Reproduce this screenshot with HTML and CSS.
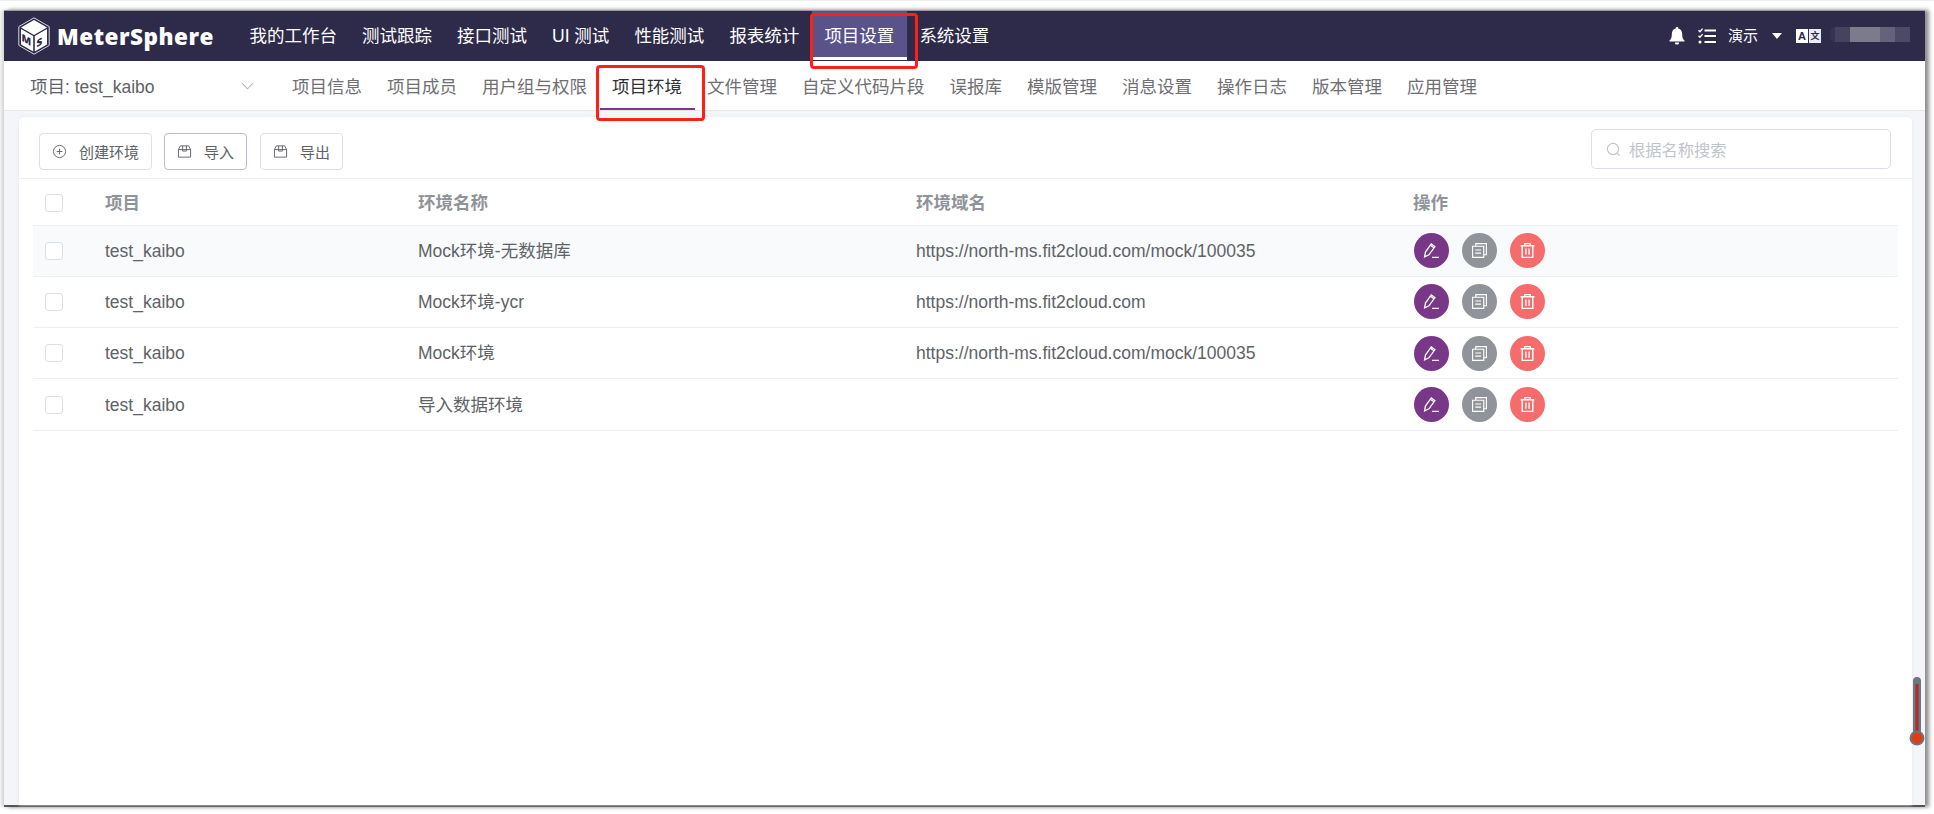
FILE: index.html

```html
<!DOCTYPE html>
<html lang="zh-CN">
<head>
  <meta charset="UTF-8">
  <title>MeterSphere</title>
  <link rel="stylesheet" href="styles.css">
</head>
<body>
  <div class="window">
    <header class="topbar">
      <div class="logo">
        <svg class="logo-mark" viewBox="0 0 32 38" width="32" height="38">
          <path d="M16 .8 31.2 9.6v18.8L16 37.2.8 28.4V9.6z" fill="none" stroke="#d8d7e2" stroke-width="1"/>
          <path d="M16 3 29 10.5 16 18 3 10.5z" fill="#fff"/>
          <path d="M3 12 15.2 19v15.6L3 27.4z" fill="#fff"/>
          <path d="M29 12 16.8 19v15.6L29 27.4z" fill="#fff"/>
          <text class="logo-letter" transform="matrix(1 .58 0 1 3.6 23.4)">M</text>
          <text class="logo-letter" transform="matrix(1 -.58 0 1 18.6 30.4)">S</text>
        </svg>
        <span class="logo-text">MeterSphere</span>
      </div>
      <nav class="main-nav">
        <a>我的工作台</a>
        <a>测试跟踪</a>
        <a>接口测试</a>
        <a>UI 测试</a>
        <a>性能测试</a>
        <a>报表统计</a>
        <a class="active">项目设置</a>
        <a>系统设置</a>
      </nav>
      <div class="top-right">
        <svg class="bell" viewBox="0 0 16 18" width="16" height="18"><path d="M8 0a1.3 1.3 0 0 1 1.3 1.5C12 2.2 13.2 4.5 13.2 7.2c0 3.300.6 4.800 2.300 6.300v1H.5v-1c1.700-1.500 2.300-3 2.300-6.300 0-2.700 1.200-5 3.900-5.700A1.300 1.300 0 0 1 8 0zM5.800 15.400h4.400a2.200 2.200 0 0 1-4.400 0z" fill="#fff"/></svg>
        <svg class="tasks" viewBox="0 0 18 16" width="18" height="16">
          <path d="M.5 2.200 2 3.700 4.600.6M.5 7.700 2 9.200 4.600 6.100" fill="none" stroke="#fff" stroke-width="1.300"/>
          <circle cx="2" cy="14" r="1.500" fill="#fff"/>
          <path d="M6.500 2.500H18M6.500 8H18M6.500 14H18" stroke="#fff" stroke-width="2"/>
        </svg>
        <span class="org">演示</span>
        <i class="caret"></i>
        <span class="lang"><b>A</b><b class="alt">文</b></span>
        <span class="blur-name"><i class="b1"></i><i class="b2"></i><i class="b3"></i><i class="b4"></i><i class="b5"></i></span>
      </div>
    </header>

    <div class="subbar">
      <div class="project-select">
        <span>项目: test_kaibo</span>
        <svg viewBox="0 0 14 8" width="13" height="8"><path d="M1 1l6 6 6-6" fill="none" stroke="#b4b4ba" stroke-width="1.100"/></svg>
      </div>
      <nav class="sub-nav">
        <a>项目信息</a>
        <a>项目成员</a>
        <a>用户组与权限</a>
        <a class="active">项目环境</a>
        <a>文件管理</a>
        <a>自定义代码片段</a>
        <a>误报库</a>
        <a>模版管理</a>
        <a>消息设置</a>
        <a>操作日志</a>
        <a>版本管理</a>
        <a>应用管理</a>
      </nav>
    </div>

    <main class="content">
      <section class="card">
        <div class="toolbar">
          <button class="btn">
            <svg viewBox="0 0 16 16" width="15" height="15"><circle cx="8" cy="8" r="6.500" fill="none" stroke="#606266"/><path d="M8 5v6M5 8h6" stroke="#606266"/></svg>
            创建环境
          </button>
          <button class="btn btn-focus">
            <svg viewBox="0 0 16 16" width="15" height="15"><path d="M1.500 6 3.500 2h9l2 4v8h-13zM1.500 6h13M6 2v5.500h4V2" fill="none" stroke="#606266"/></svg>
            导入
          </button>
          <button class="btn">
            <svg viewBox="0 0 16 16" width="15" height="15"><path d="M1.500 6 3.500 2h9l2 4v8h-13zM1.500 6h13M6 2v5.500h4V2" fill="none" stroke="#606266"/></svg>
            导出
          </button>
          <div class="search">
            <svg viewBox="0 0 16 16" width="15" height="15"><circle cx="7.500" cy="7.500" r="6" fill="none" stroke="#c0c4cc" stroke-width="1.200"/><path d="M12 12l2.500 2.500" stroke="#c0c4cc" stroke-width="1.200"/></svg>
            <span>根据名称搜索</span>
          </div>
        </div>

        <table class="env-table">
          <thead>
            <tr>
              <th class="col-check"><i class="check"></i></th>
              <th class="col-project">项目</th>
              <th class="col-name">环境名称</th>
              <th class="col-domain">环境域名</th>
              <th>操作</th>
            </tr>
          </thead>
          <tbody id="rows"></tbody>
        </table>
      </section>
    </main>

    <div class="outline outline-top"></div>
    <div class="outline outline-sub"></div>
    <svg class="thermo" viewBox="0 0 16 70" width="16" height="70">
      <rect x="4" y="0" width="8" height="60" rx="4" fill="#6b7785"/>
      <rect x="6.500" y="7" width="3" height="50" fill="#b8281f"/>
      <circle cx="8" cy="61" r="7.500" fill="#6b7785"/>
      <circle cx="8" cy="61" r="5.500" fill="#e03c17"/>
    </svg>
  </div>
  <script src="rows.js"></script>
</body>
</html>
```

FILE: rows.js

```js
const envs = [
  ["Mock环境-无数据库", "https://north-ms.fit2cloud.com/mock/100035"],
  ["Mock环境-ycr", "https://north-ms.fit2cloud.com"],
  ["Mock环境", "https://north-ms.fit2cloud.com/mock/100035"],
  ["导入数据环境", ""]
];

const editIcon = '<svg viewBox="0 0 16 16" width="17" height="17"><path d="M1.500 14 2.300 9.500 7.800 1.800 11.200 4.300 5.600 12zM7 3 10.300 5.500M8.500 14.500H15" fill="none" stroke="#fff" stroke-width="1.200"/></svg>';
const copyIcon = '<svg viewBox="0 0 16 16" width="17" height="17"><path d="M4.500 4V1.500h10V12H12M1.500 4h10.500v10.500H1.500zM4 7.500h5.500M4 10.500h5.500" fill="none" stroke="#fff" stroke-width="1.100"/></svg>';
const trashIcon = '<svg viewBox="0 0 16 16" width="17" height="17"><path d="M1.500 3.500h13M5.500 3.500V1.500h5v2M3 3.500V14.500h10V3.500M6.500 6v6M9.500 6v6" fill="none" stroke="#fff" stroke-width="1.300"/></svg>';

document.getElementById("rows").innerHTML = envs.map((env, i) => `
  <tr class="${i === 0 ? "hover" : ""}">
    <td><i class="check"></i></td>
    <td>test_kaibo</td>
    <td>${env[0]}</td>
    <td>${env[1]}</td>
    <td>
      <div class="actions">
        <span class="round purple">${editIcon}</span>
        <span class="round grey">${copyIcon}</span>
        <span class="round red">${trashIcon}</span>
      </div>
    </td>
  </tr>`).join("");
```

FILE: styles.css

```css
* { box-sizing: border-box; }
html, body { margin: 0; height: 100%; overflow: hidden; }
body { background: #fff; border-top: 1px solid #eee; font-family: "Liberation Sans", "Noto Sans CJK SC", sans-serif; color: #606266; }

.window { position: relative; margin: 9px 9px 0 4px; height: 797px; display: flex; flex-direction: column; background: #f4f5f8; border-top: 1px solid #9a9a9a; border-bottom: 2px solid #555; box-shadow: 4px 0 4px #8f8f8f, -3px 0 3px #d9d9d9; }

.topbar { height: 50px; flex: none; background: #2e2a4a; display: flex; align-items: center; color: #fff; }
.logo { width: 233px; padding-left: 14px; display: flex; align-items: center; flex: none; }
.logo-letter { font-family: "Open Sans", sans-serif; font-weight: 800; font-size: 10px; fill: #2e2a4a; }
.logo-text { margin-left: 7px; font-family: "Open Sans", sans-serif; font-weight: 800; font-size: 22.5px; letter-spacing: .5px; white-space: nowrap; }
.main-nav { display: flex; height: 49px; align-self: flex-start; }
.main-nav a { display: flex; align-items: center; padding: 0 12.5px; font-size: 17.5px; white-space: nowrap; border-bottom: 3px solid transparent; }
.main-nav a.active { background: #5a5389; border-bottom-color: #fff; }
.top-right { margin-left: auto; display: flex; align-items: center; padding-right: 15px; }
.bell { margin-right: 13px; }
.tasks { margin-right: 12px; }
.org { font-size: 15px; margin-top: -3px; }
.caret { width: 0; height: 0; margin: 5px 14px 0; border: 5px solid transparent; border-top: 6px solid #fff; border-left-width: 5.5px; border-right-width: 5.5px; }
.lang { display: flex; gap: 1px; margin-right: 9px; }
.lang b { width: 12px; height: 14px; background: #fff; color: #2e2a4a; font-size: 11px; line-height: 14px; text-align: center; }
.lang b.alt { background: #ecebf2; font-size: 9px; }
.blur-name { display: flex; height: 15px; width: 80px; margin-top: -3px; }
.blur-name i { display: block; }
.b1 { width: 5px; background: #36324f; border-radius: 5px 0 0 5px; }
.b2 { width: 15px; background: #47435f; }
.b3 { width: 30px; background: #7d7a8c; }
.b4 { width: 15px; background: #66627a; }
.b5 { width: 15px; background: #4d4966; }

.subbar { height: 50px; flex: none; background: #fff; border-bottom: 1px solid #e6e6e6; display: flex; }
.project-select { width: 275.5px; flex: none; display: flex; align-items: center; padding-left: 26px; font-size: 17.5px; color: #606266; }
.project-select span { width: 211px; }
.sub-nav { display: flex; height: 49px; }
.sub-nav a { display: flex; align-items: center; padding: 0 12.5px; font-size: 17.5px; color: #6f6f73; white-space: nowrap; }
.sub-nav a.active { color: #303133; border-bottom: 2px solid #783887; padding-top: 2px; }

.content { flex: 1; padding: 6px 13px 0 15px; min-height: 0; }
.card { background: #fff; height: 100%; border-radius: 5px 5px 0 0; box-shadow: 0 0 3px #e4e5ec; }

.toolbar { height: 62px; border-bottom: 1px solid #ebeef5; display: flex; align-items: flex-start; padding: 16px 21px 0 20px; }
.btn { height: 37px; margin-right: 12px; padding: 0 12px; display: flex; align-items: center; gap: 12px; background: #fff; border: 1px solid #dcdfe6; border-radius: 4px; font: inherit; font-size: 15px; color: #606266; white-space: nowrap; }
.btn-focus { border-color: #c3b8cf; margin-right: 13px; }
.search { margin-left: auto; margin-top: -4px; width: 300px; height: 40px; border: 1px solid #dcdfe6; border-radius: 5px; display: flex; align-items: center; gap: 8px; padding-left: 14px; font-size: 16.25px; color: #c0c4cc; }

.env-table { width: 1865px; margin-left: 14px; border-collapse: collapse; table-layout: fixed; font-size: 17.5px; line-height: 20px; }
.env-table th { height: 46px; padding: 2px 0 0; text-align: left; font-weight: 700; color: #909399; border-bottom: 1px solid #ebeef5; }
.env-table td { height: 51.3px; padding: 0; border-bottom: 1px solid #ebeef5; white-space: nowrap; }
.env-table tr.hover td { background: #f9fafc; }
.col-check { width: 72px; }
.col-project { width: 313px; }
.col-name { width: 498px; }
.col-domain { width: 497px; }
.check { display: block; width: 18px; height: 18px; margin-left: 12px; border: 1px solid #dcdfe6; border-radius: 3px; background: #fff; }

.actions { display: flex; gap: 13px; margin-left: 1px; }
.round { width: 35px; height: 35px; border-radius: 50%; display: flex; align-items: center; justify-content: center; }
.purple { background: #783887; }
.grey { background: #909399; }
.red { background: #f56c6c; }

.outline { position: absolute; border: 3px solid #ff2015; border-radius: 4px; pointer-events: none; }
.outline-top { left: 806px; top: 2px; width: 108px; height: 56px; }
.outline-sub { left: 592px; top: 54px; width: 109px; height: 56px; }
.thermo { position: absolute; left: 1905px; top: 666px; }
```
